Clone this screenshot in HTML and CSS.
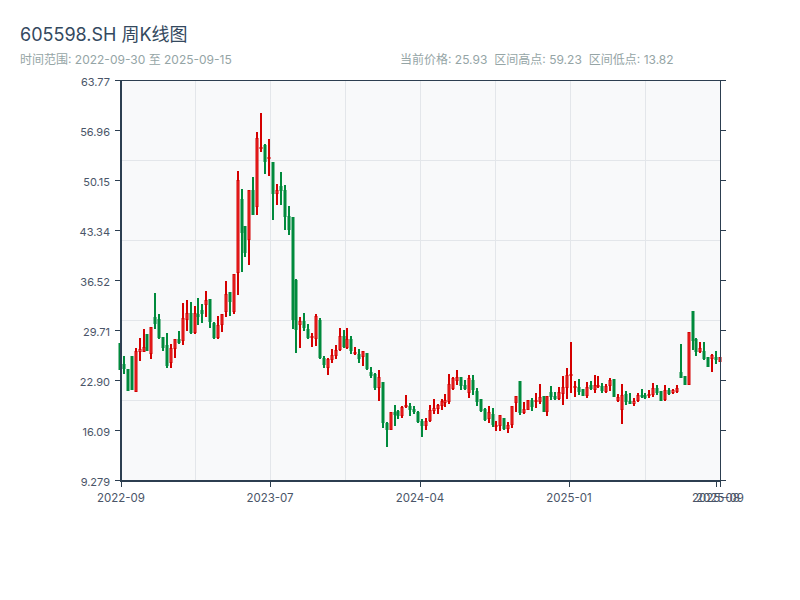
FILE: index.html
```html
<!DOCTYPE html>
<html lang="en">

<head>
    <meta charset="UTF-8">
    <meta name="viewport" content="width=device-width, initial-scale=1.0">
    <title>605598.SH 周K线图</title>
    <link rel="stylesheet" href="styles.css">
</head>

<body>
    <div class="head">
        <h1 class="title">605598.SH 周K线图</h1>
        <div class="info">
            <div class="range">时间范围: 2022-09-30 至 2025-09-15</div>
            <div class="stats">
                <span>当前价格: 25.93</span>
                <span>区间高点: 59.23</span>
                <span>区间低点: 13.82</span>
            </div>
        </div>
    </div>
    <svg class="chart" id="chart" width="800" height="450" viewBox="0 70 800 450"></svg>
    <script src="chart.js"></script>
</body>

</html>
```

FILE: styles.css
```css
* {
    margin: 0;
    padding: 0;
}

body {
    background-color: #fff;
    font-family: Inter, "Noto Sans CJK SC", sans-serif;
}

.head {
    height: 70px;
    padding: 25px 20px 0;
    box-sizing: border-box;
}

.title {
    font-size: 18px;
    line-height: 20px;
    font-weight: normal;
    color: #34495e;
}

.info {
    display: grid;
    grid-template-columns: 380px 1fr;
    margin-top: 7px;
    font-size: 12px;
    line-height: 16px;
    color: #95a5a6;
}

.stats {
    display: flex;
    gap: 7px;
}

.chart {
    display: block;
}

.chart text {
    font-size: 11px;
    fill: #4a5568;
}

.chart .x-label {
    font-size: 11.5px;
}

.plot {
    fill: #f8f9fa;
}

.grid {
    stroke: #e3e6ea;
    stroke-width: 1;
}

.axis {
    stroke: #2c3e50;
    stroke-width: 1;
}

.axis-main {
    stroke: #2c3e50;
    stroke-width: 2;
}

.up {
    fill: #d40000;
}

.up-body {
    fill: #f03030;
    stroke: #d40000;
    stroke-width: 1;
}

.down {
    fill: #008a3c;
}
```

FILE: chart.js
```js
var NS = 'http://www.w3.org/2000/svg';
var chart = document.getElementById('chart');

// [1 up / 0 down, wick top, wick bottom, body top, body bottom], all in page pixels
var candles = [
    [0,343,370,343,370],[0,356,374,364,369],[0,369,391,369,391],[0,356,390,356,390],
    [1,348,392,351,392],[1,338,361,349,352],[1,329,352,347,352],[0,334,351,334,351],
    [1,327,359,327,354],[0,293,329,317,324],[0,314,339,319,338],[0,337,351,337,348],
    [0,333,368,345,366],[1,344,368,348,363],[1,339,358,339,349],[0,331,344,339,343],
    [1,303,345,318,341],[1,300,331,313,320],[0,302,334,313,333],[1,306,334,313,333],
    [0,298,325,314,317],[0,304,323,310,314],[1,291,317,300,305],[0,299,328,299,322],
    [0,322,339,323,338],[1,316,339,325,338],[1,314,332,314,325],[1,281,317,294,312],
    [0,292,316,292,302],[1,274,314,274,312],[1,171,295,180,273],[0,189,272,199,233],
    [0,226,257,226,253],[1,190,265,190,240],[0,177,215,190,215],[1,132,215,138,207],
    [1,113,152,147,149],[0,144,174,145,162],[1,139,176,157,159],[0,162,220,162,194],
    [1,184,205,190,194],[0,172,205,186,191],[0,185,230,190,217],[0,206,235,216,230],
    [0,217,329,217,320],[0,279,353,280,330],[1,317,348,321,325],[0,313,331,321,328],
    [0,324,339,329,338],[1,333,347,336,338],[1,314,346,316,339],[0,318,359,320,358],
    [0,356,368,358,365],[1,358,375,359,368],[1,349,363,355,360],[1,345,359,350,356],
    [1,328,351,336,350],[0,330,348,336,347],[1,328,349,339,348],[0,336,354,339,351],
    [1,347,355,352,354],[0,349,363,354,359],[1,351,366,351,357],[0,353,370,353,369],
    [0,367,378,372,376],[0,373,390,374,388],[1,370,401,377,388],[0,382,428,382,423],
    [0,422,447,423,430],[1,412,430,412,430],[0,405,426,412,415],[0,410,419,411,416],
    [1,406,418,407,416],[1,395,408,405,407],[0,403,416,406,410],[0,406,414,409,412],
    [0,411,423,412,422],[0,419,437,421,426],[1,418,430,421,426],[1,405,422,410,421],
    [1,399,414,408,411],[1,404,414,405,409],[1,399,410,401,406],[1,394,407,400,403],
    [1,374,404,384,402],[1,377,390,378,389],[1,370,385,377,381],[0,377,390,377,386],
    [0,380,390,385,389],[1,375,398,378,393],[0,375,395,380,390],[0,388,406,391,402],
    [0,399,412,399,411],[0,408,421,409,420],[1,406,423,412,419],[0,408,427,414,425],
    [1,421,431,425,427],[1,415,431,415,426],[0,418,430,418,429],[1,422,433,425,429],
    [1,406,428,406,425],[1,396,412,396,403],[0,381,415,381,413],[1,402,414,409,413],
    [1,400,410,400,410],[0,398,411,400,407],[1,393,408,400,402],[1,384,404,397,402],
    [0,396,412,396,412],[1,396,416,396,412],[0,386,400,392,397],[0,392,400,396,399],
    [1,387,400,392,399],[1,376,405,387,394],[1,368,399,375,388],[1,342,393,374,376],
    [1,381,397,386,388],[0,379,395,387,392],[0,389,396,389,396],[1,382,398,387,396],
    [0,381,390,385,389],[1,375,393,385,390],[1,376,388,385,387],[0,383,393,386,391],
    [1,384,393,386,392],[1,378,391,380,386],[0,379,397,379,397],[1,394,402,397,401],
    [1,384,424,395,410],[0,391,405,394,402],[0,393,404,401,404],[1,398,406,401,404],
    [1,393,402,395,401],[0,389,398,395,397],[0,393,399,395,398],[1,390,398,394,396],
    [1,383,397,388,395],[0,385,395,388,393],[0,391,401,391,401],[1,385,401,390,400],
    [0,388,395,390,394],[1,389,394,390,393],[1,385,393,388,392],[0,344,378,372,378],
    [0,376,385,376,385],[1,332,385,332,385],[0,311,350,311,341],[0,338,356,339,352],
    [1,342,353,348,352],[0,342,360,351,359],[0,357,367,357,367],[1,354,372,355,359],
    [0,351,364,357,360],[1,357,362,357,362]
];

function add(tag, attrs, text) {
    var el = document.createElementNS(NS, tag);
    for (var key in attrs) {
        el.setAttribute(key, attrs[key]);
    }
    if (text) {
        el.textContent = text;
    }
    chart.appendChild(el);
}

function line(x1, y1, x2, y2, cls) {
    add('line', { x1: x1, y1: y1, x2: x2, y2: y2, class: cls });
}

add('rect', { x: 121, y: 81, width: 599, height: 400, class: 'plot' });

[195.5, 270.5, 345.5, 420.5, 495.5, 570.5, 645.5].forEach(function (x) {
    line(x, 81, x, 481, 'grid');
});
[160.5, 240.5, 320.5, 400.5].forEach(function (y) {
    line(121, y, 720, y, 'grid');
});

var step = 600 / (candles.length - 1);
candles.forEach(function (c, i) {
    var x = Math.round(119 + i * step);
    add('rect', { x: x, y: c[1], width: 2, height: c[2] - c[1], class: c[0] ? 'up' : 'down' });
    if (c[0]) {
        add('rect', { x: x, y: c[3] + 0.5, width: 2, height: c[4] - c[3] - 1, class: 'up-body' });
    } else {
        add('rect', { x: x - 0.5, y: c[3], width: 3, height: c[4] - c[3], class: 'down' });
    }
});

// frame
line(121, 80.5, 726, 80.5, 'axis');
line(720.5, 81, 720.5, 481, 'axis');
line(121, 80, 121, 482, 'axis-main');
line(120, 481, 721, 481, 'axis-main');

var yLabels = ['63.77', '56.96', '50.15', '43.34', '36.52', '29.71', '22.90', '16.09', '9.279'];
yLabels.forEach(function (label, i) {
    var y = 81 + i * 50;
    line(115, y - 0.5, 121, y - 0.5, 'axis');
    line(720, y - 0.5, 726, y - 0.5, 'axis');
    add('text', { x: 110, y: y + 5, 'text-anchor': 'end' }, label);
});

[[121, '2022-09'], [270, '2023-07'], [420, '2024-04'], [569, '2025-01'], [716, '2025-08'], [720, '2025-09']].forEach(function (t) {
    line(t[0] + 0.5, 481, t[0] + 0.5, 487, 'axis');
    add('text', { x: t[0], y: 502, 'text-anchor': 'middle', class: 'x-label' }, t[1]);
});
```
